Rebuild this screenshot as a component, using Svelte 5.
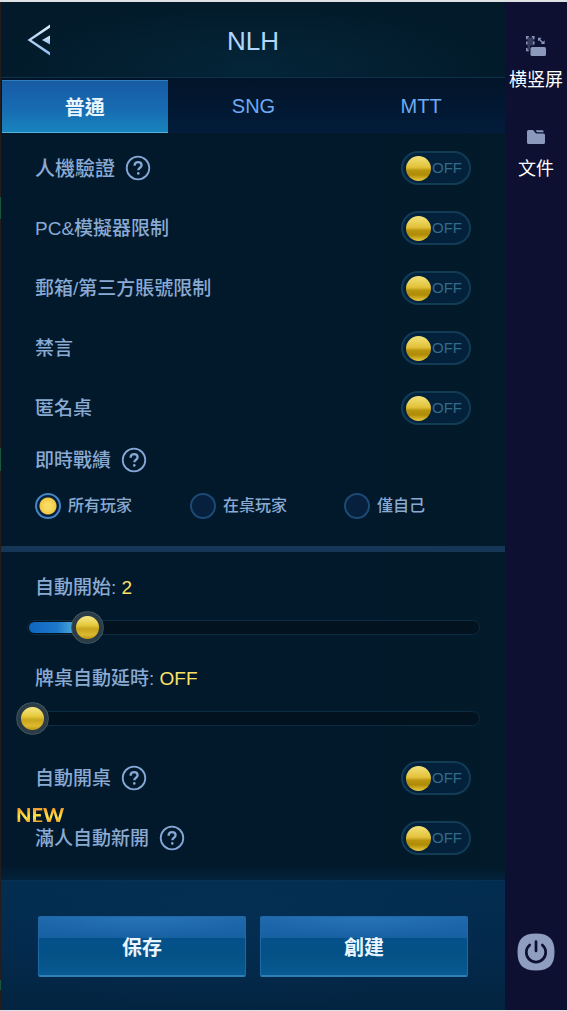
<script>
  const tabs = ['普通', 'SNG', 'MTT'];
  let activeTab = $state('普通');

  let limits = $state([
    { id: 'captcha', label: '人機驗證', help: true, large: true, on: false },
    { id: 'emulator', label: 'PC&模擬器限制', on: false },
    { id: 'account', label: '郵箱/第三方賬號限制', on: false },
    { id: 'mute', label: '禁言', on: false },
    { id: 'anonymous', label: '匿名桌', on: false }
  ]);

  let automation = $state([
    { id: 'auto-open', label: '自動開桌', help: true, on: false },
    { id: 'auto-full', label: '滿人自動新開', help: true, isNew: true, on: false }
  ]);

  const audiences = ['所有玩家', '在桌玩家', '僅自己'];
  let audience = $state('所有玩家');

  let sliders = $state([
    { id: 'auto-start', label: '自動開始', value: 2, max: 16 },
    { id: 'auto-extend', label: '牌桌自動延時', value: 0, max: 16 }
  ]);
</script>

{#snippet helpButton()}
  <button class="help" type="button" aria-label="說明">
    <svg viewBox="0 0 26 26" width="26" height="26" aria-hidden="true">
      <circle cx="13" cy="13" r="11.3" />
      <path d="M9.6 10.700c0-2.200 1.400-3.500 3.500-3.500s3.500 1.300 3.500 3.100c0 2.300-3.300 2.600-3.300 4.900" />
      <circle class="dot" cx="13.3" cy="18.4" r="1.3" />
    </svg>
  </button>
{/snippet}

{#snippet switchRow(item)}
  <div class="row">
    {#if item.isNew}<span class="new">NEW</span>{/if}
    <label class="name" class:large={item.large} for={item.id}>{item.label}</label>
    {#if item.help}{@render helpButton()}{/if}
    <label class="toggle" class:on={item.on}>
      <input id={item.id} type="checkbox" bind:checked={item.on} />
      <span>{item.on ? 'ON' : 'OFF'}</span>
    </label>
  </div>
{/snippet}

<div class="screen">
  <div class="edge"></div>
  <main>
    <header>
      <button class="back" type="button" aria-label="返回">
        <svg viewBox="0 0 24 32" width="24" height="32" aria-hidden="true">
          <defs>
            <linearGradient id="steel" x1="0" y1="0" x2="0" y2="1">
              <stop offset="0" stop-color="#ddecf8" />
              <stop offset="1" stop-color="#8dbcf0" />
            </linearGradient>
          </defs>
          <path fill="url(#steel)" d="M24 .5v3.200L5.500 16 24 28.300v3.200L1.500 16z" />
          <path fill="url(#steel)" d="M24 11.500v9L16 16z" />
        </svg>
      </button>
      <h1>NLH</h1>
    </header>

    <div class="tabs" role="tablist">
      {#each tabs as tab}
        <button
          type="button"
          role="tab"
          aria-selected={activeTab === tab}
          class:active={activeTab === tab}
          onclick={() => (activeTab = tab)}>{tab}</button>
      {/each}
    </div>

    <section class="limits">
      {#each limits as item}{@render switchRow(item)}{/each}
      <div class="row short">
        <span class="name">即時戰績</span>
        {@render helpButton()}
      </div>
      <div class="radios">
        {#each audiences as option}
          <label>
            <input type="radio" name="audience" value={option} bind:group={audience} />
            {option}
          </label>
        {/each}
      </div>
    </section>

    <section class="automation">
      {#each sliders as s}
        <div class="slider">
          <label for={s.id}>{s.label}: <b>{s.value || 'OFF'}</b></label>
          <div class="range">
            <div class="rail"><i style="width: {(s.value / s.max) * 100}%"></i></div>
            <input id={s.id} type="range" min="0" max={s.max} bind:value={s.value} />
          </div>
        </div>
      {/each}
      {#each automation as item}{@render switchRow(item)}{/each}
    </section>

    <footer>
      <button type="button">保存</button>
      <button type="button">創建</button>
    </footer>
  </main>

  <aside>
    <button type="button" class="tool">
      <svg viewBox="0 0 20 20" width="20" height="20" aria-hidden="true">
        <path fill="#363d60" d="M1.500 1.500h6v8H4v4H1.500z" />
        <path fill="none" stroke="#8b99bc" stroke-width="1.5" d="M.8 3.200V.8h2M5.800.8h2v2.400M7.800 5.500v3M.8 5.500v3M.8 12v2.600h2" />
        <path fill="none" stroke="#8b99bc" stroke-width="1.4" d="M12.500 2.500l5 5" />
        <path fill="#8b99bc" d="M12 1.800h3.600L12 5.200zM18.600 4.200v3.800h-3.800z" />
        <rect x="4.500" y="11" width="15.500" height="9" rx="1.600" fill="#8b99bc" />
      </svg>
      <span>横竖屏</span>
    </button>
    <button type="button" class="tool">
      <svg viewBox="0 0 20 16" width="20" height="16" aria-hidden="true">
        <path fill="#8b99bc" d="M2.500 1h4.500l3 3.500h7.500a1.500 1.500 0 0 1 1.500 1.500v7.500a1.500 1.500 0 0 1-1.500 1.500h-15A1.500 1.500 0 0 1 1 13.500v-11A1.500 1.500 0 0 1 2.500 1z" />
        <path fill="#8b99bc" d="M9.500 1.300h7a1 1 0 0 1 1 1v.9h-6.500z" />
      </svg>
      <span>文件</span>
    </button>
    <button type="button" class="power" aria-label="電源">
      <svg viewBox="0 0 38 38" width="38" height="38" aria-hidden="true">
        <path fill="#8f9dc0" d="M19 .5c13 0 18.500 5.500 18.500 18.500S32 37.500 19 37.500.5 32 .5 19 6 .5 19 .5z" />
        <path fill="none" stroke="#0d1030" stroke-width="2.700" stroke-linecap="round" d="M12.700 12a9.700 9.700 0 1 0 12.600 0M19 8.500v9.500" />
      </svg>
    </button>
  </aside>
</div>

<style>
  :global(body) {
    margin: 0;
    background: #021a2b;
  }

  .screen {
    box-sizing: border-box;
    display: grid;
    grid-template-columns: 1px minmax(0, 1fr) 62px;
    min-height: 100vh;
    border-top: 2px solid #dfe2e5;
    border-bottom: 1px solid #dfe2e5;
    font-family: 'Liberation Sans', 'Noto Sans CJK TC', sans-serif;
    font-weight: 500;
    color: #8aaad4;
  }

  button {
    padding: 0;
    border: 0;
    background: none;
    font: inherit;
    color: inherit;
    cursor: pointer;
  }

  svg {
    display: block;
  }

  .edge {
    background: linear-gradient(
      #241d1b 195px, #1d5638 195px 217px, #241d1b 217px 446px,
      #1d5638 446px 469px, #241d1b 469px 978px, #1d5638 978px 988px, #241d1b 988px
    );
  }

  main {
    display: flex;
    flex-direction: column;
    background: linear-gradient(90deg, #02192b 75%, #021a29);
  }

  header {
    display: grid;
    grid-template-columns: 76px 1fr 76px;
    align-items: center;
    height: 75px;
    border-bottom: 1px solid #0d3149;
    background: radial-gradient(ellipse at 50% 90%, #042538, #021a2a 75%);
  }

  .back {
    justify-self: start;
    margin-left: 25px;
  }

  h1 {
    margin: 0;
    padding-top: 2px;
    font-size: 26px;
    font-weight: 400;
    line-height: 32px;
    text-align: center;
    color: #b4d6fc;
  }

  .tabs {
    display: grid;
    grid-template-columns: repeat(3, 1fr);
    height: 53px;
    padding: 2px 0 0 1px;
    background: linear-gradient(#021429, #021c3a);
    font-size: 20px;
    color: #6fa9f3;
  }

  .tabs .active {
    margin-right: 2px;
    border-top: 1px solid #2f80bd;
    border-bottom: 1px solid #55b0dc;
    background: linear-gradient(#175ba5, #176bb2 55%, #1884bd);
    color: #e8f6ff;
    font-weight: 700;
  }

  .limits {
    padding: 5px 0 15px;
    border-bottom: 6px solid #153657;
  }

  .row {
    position: relative;
    display: flex;
    align-items: center;
    gap: 10px;
    height: 60px;
    padding: 0 34px;
  }

  .short {
    height: 43px;
  }

  .name {
    padding-top: 2px;
    font-size: 19px;
    line-height: 28px;
  }

  .large {
    font-size: 20px;
  }

  .help svg {
    fill: none;
    stroke: #86a8d6;
    stroke-width: 1.8;
  }

  .help path {
    stroke-width: 2.3;
  }

  .help .dot {
    fill: #86a8d6;
    stroke: none;
  }

  .new {
    position: absolute;
    top: 0;
    left: 15px;
    font: 900 20px/14px Lato, sans-serif;
    color: transparent;
    background: linear-gradient(#f29a2e, #ffd23a 45%, #ffe94d 65%, #f3a02b);
    background-clip: text;
  }

  .toggle {
    box-sizing: border-box;
    display: flex;
    align-items: center;
    justify-content: space-between;
    width: 70px;
    height: 34px;
    margin-left: auto;
    padding: 0 7px 0 3px;
    border: 2px solid #123c56;
    border-radius: 17px;
    background: #04213c;
    font-size: 15px;
    line-height: 20px;
    color: #326a8b;
  }

  .toggle.on {
    flex-direction: row-reverse;
    padding: 0 3px 0 7px;
  }

  .toggle input {
    appearance: none;
    width: 25px;
    height: 25px;
    margin: 0;
    border-radius: 50%;
    background: linear-gradient(#f3e27a, #e3c13b 45%, #b8940f 58%, #b08b06 75%, #e8cb3f);
  }

  .radios {
    display: grid;
    grid-template-columns: 155px 154px 1fr;
    align-items: center;
    height: 50px;
    padding: 0 0 0 34px;
    font-size: 16px;
    line-height: 24px;
  }

  .radios label {
    display: flex;
    align-items: center;
    gap: 7px;
  }

  .radios input {
    appearance: none;
    box-sizing: border-box;
    width: 26px;
    height: 26px;
    margin: 0;
    border: 2px solid #1d4a75;
    border-radius: 50%;
    background: #06203d;
  }

  .radios input:checked {
    border-color: #4585c4;
    background: radial-gradient(circle, #f8dc62 0 3px, #f1c844 8px, #061f3e 9px);
  }

  .automation {
    flex: 1;
    padding: 15px 0 12px;
    background: linear-gradient(transparent calc(100% - 14px), #02223b);
  }

  .slider {
    padding-bottom: 11px;
  }

  .slider + .row {
    margin-top: -1px;
  }

  .slider label {
    display: block;
    padding: 2px 34px 0;
    font-size: 19px;
    line-height: 38px;
  }

  .slider b {
    font-weight: 400;
    color: #fbe267;
  }

  .range {
    display: grid;
    align-items: center;
    height: 40px;
    padding: 0 14px 0 15px;
  }

  .rail,
  .range input {
    grid-area: 1 / 1;
  }

  .rail {
    box-sizing: border-box;
    height: 15px;
    margin: 0 11px;
    padding: 1px;
    border: 1px solid #0b2c42;
    border-radius: 8px;
    background: #02121e;
  }

  .rail i {
    display: block;
    height: 11px;
    border-radius: 6px 0 0 6px;
    background: linear-gradient(90deg, #1064be, #1d78cc 50%, #48a8da 80%);
  }

  .range input {
    appearance: none;
    width: 100%;
    height: 33px;
    margin: 0;
    background: none;
  }

  .range input::-webkit-slider-thumb {
    appearance: none;
    box-sizing: border-box;
    width: 33px;
    height: 33px;
    border: 1px solid #3a5361;
    border-radius: 50%;
    background:
      radial-gradient(circle, transparent 11px, #2b3c47 12px),
      linear-gradient(#f3e480 5px, #e6ca3e 13px, #c8a51b 17px, #dcb92e 23px, #b38c10 28px);
  }

  footer {
    display: grid;
    grid-template-columns: 1fr 1fr;
    gap: 14px;
    padding: 35px 37px 33px;
    border-top: 1px solid #073052;
    background:
      radial-gradient(ellipse at 45% 30%, #05335a55, transparent 70%),
      linear-gradient(#032d50, #032a4d 50%, #032440);
  }

  footer button {
    height: 61px;
    border: 1px solid #1d69a6;
    border-bottom: 2px solid #2d7fb4;
    border-radius: 2px;
    background:
      radial-gradient(ellipse at 50% 0, #3581c766, transparent 70%) 0 0 / 100% 21px no-repeat,
      linear-gradient(#2069ad, #1760a2 21px, #04508a 21px, #055287 70%, #085b94);
    font-size: 20px;
    font-weight: 700;
    color: #e9f5ff;
  }

  aside {
    display: flex;
    flex-direction: column;
    align-items: center;
    padding: 34px 0 39px;
    background: #0d1030;
    font-family: 'Noto Sans CJK SC', sans-serif;
    font-weight: 400;
    font-size: 18px;
    line-height: 26px;
    color: #fff;
  }

  .tool {
    display: flex;
    flex-direction: column;
    align-items: center;
    gap: 9px;
    margin-bottom: 38px;
    white-space: nowrap;
  }

  .power {
    margin-top: auto;
  }
</style>
